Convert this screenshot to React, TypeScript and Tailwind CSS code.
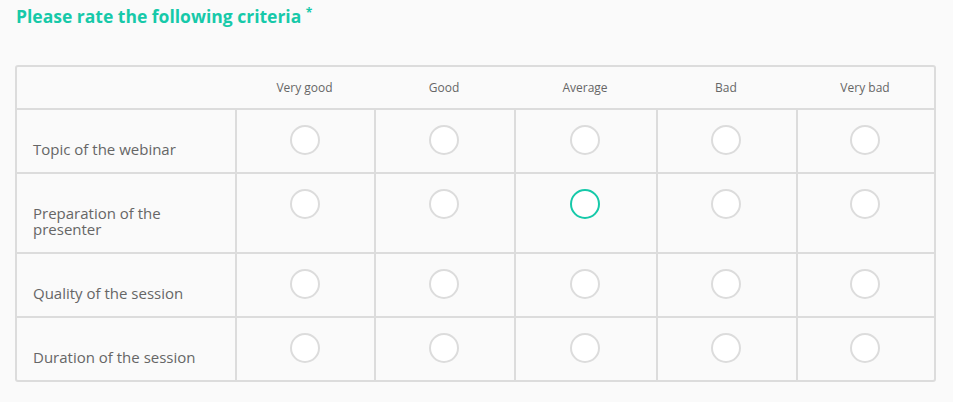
const columns = ['Very good', 'Good', 'Average', 'Bad', 'Very bad'];

const rows = [
  { label: 'Topic of the webinar', selected: -1 },
  { label: 'Preparation of the presenter', selected: 2 },
  { label: 'Quality of the session', selected: -1 },
  { label: 'Duration of the session', selected: -1 },
];

const gridCols = 'grid grid-cols-[218px_139px_140px_142px_140px_138px]';

function Radio({ checked }: { checked: boolean }) {
  return (
    <span
      className={`block w-[30px] h-[30px] rounded-full bg-white border-2 ${
        checked ? 'border-[#16c9a9]' : 'border-[#dcdcdc]'
      }`}
    />
  );
}

export default function App() {
  return (
    <div
      className="min-h-screen bg-[#fafafa] pl-[15px] pt-[4px]"
      style={{ fontFamily: '"Open Sans", "Liberation Sans", sans-serif' }}
    >
      <h2 className="pl-px text-[17.5px] font-bold leading-[24px] text-[#16c9a9]">
        Please rate the following criteria <sup className="text-[12px] font-bold">*</sup>
      </h2>

      <div className="mt-[37px] w-[921px] border-2 border-[#dcdcdc] rounded-[3px]">
        <div className={`${gridCols} h-[41px] items-center`}>
          <div />
          {columns.map((c) => (
            <div key={c} className="text-center text-[12px] text-[#666]">
              {c}
            </div>
          ))}
        </div>

        {rows.map((r) => (
          <div key={r.label} className={`${gridCols} border-t-2 border-[#dcdcdc]`}>
            <div className="pl-4 pr-[30px] pt-[31px] pb-[15px] text-[15px] leading-4 text-[#666]">
              {r.label}
            </div>
            {columns.map((c, i) => (
              <div key={c} className="flex justify-center border-l-2 border-[#dcdcdc] pt-[15px] pr-[2px]">
                <Radio checked={r.selected === i} />
              </div>
            ))}
          </div>
        ))}
      </div>
    </div>
  );
}
